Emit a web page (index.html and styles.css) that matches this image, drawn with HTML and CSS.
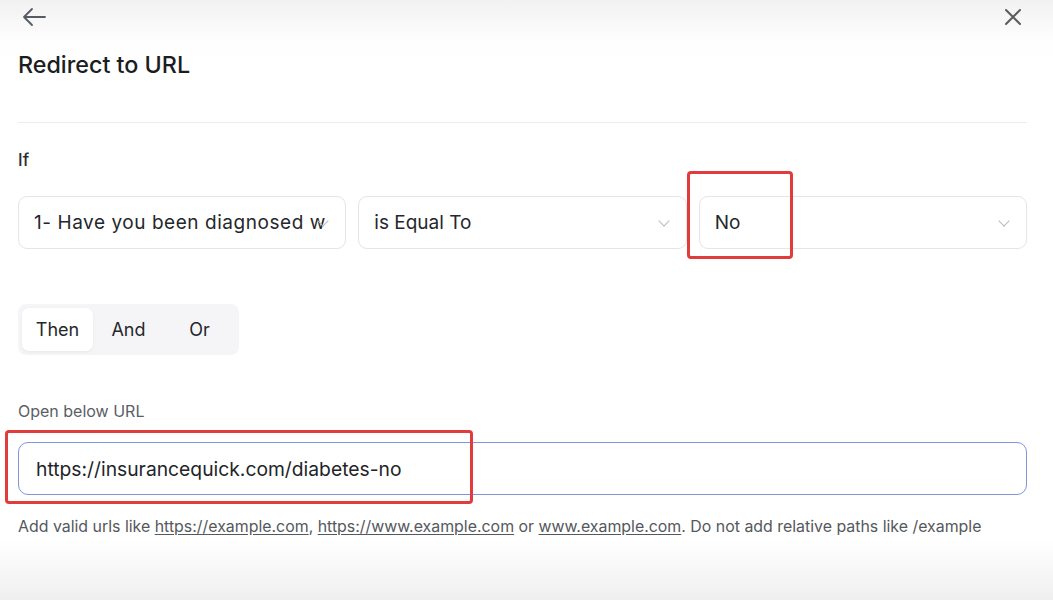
FILE: index.html
```html
<!DOCTYPE html>
<html lang="en">
<head>
    <meta charset="UTF-8">
    <meta name="viewport" content="width=device-width, initial-scale=1.0">
    <title>Redirect to URL</title>
    <link rel="stylesheet" href="styles.css">
</head>
<body>

<div id="panel">
    <div id="topbar">
        <svg class="icon" width="26" height="20" viewBox="0 0 26 20">
            <path d="M24 10H3M11 2L3 10l8 8" fill="none" stroke="#555a66" stroke-width="1.8" stroke-linecap="round" stroke-linejoin="round"/>
        </svg>
        <svg class="icon" width="18" height="18" viewBox="0 0 18 18">
            <path d="M2 2l14 14M16 2L2 16" fill="none" stroke="#5c5c5c" stroke-width="2" stroke-linecap="round"/>
        </svg>
    </div>

    <h1 id="title">Redirect to URL</h1>
    <hr id="divider">

    <div class="label-if">If</div>

    <div id="conditions">
        <div class="select">
            <span class="value">1- Have you been diagnosed with</span>
            <span class="chevron"></span>
        </div>
        <div class="select">
            <span class="value">is Equal To</span>
            <span class="chevron"></span>
        </div>
        <div class="select marked">
            <span class="value">No</span>
            <span class="chevron"></span>
            <div class="red-box box-no"></div>
        </div>
    </div>

    <div id="segments">
        <button class="seg active">Then</button>
        <button class="seg">And</button>
        <button class="seg">Or</button>
    </div>

    <div class="field-label">Open below URL</div>
    <div id="url-wrap">
        <input type="text" id="url" value="https://insurancequick.com/diabetes-no">
        <div class="red-box box-url"></div>
    </div>

    <p id="help">
        Add valid urls like <a href="#">https://example.com</a>, <a href="#">https://www.example.com</a> or <a href="#">www.example.com</a>. Do not add relative paths like /example
    </p>
</div>

</body>
</html>
```

FILE: styles.css
```css
body {
    margin: 0;
    padding: 0;
    font-family: Inter, "Noto Sans", sans-serif;
    color: #1f2328;
}

#panel {
    height: 600px;
    box-sizing: border-box;
    padding: 0 26px 0 18px;
    background: linear-gradient(to bottom, #f1f1f1 0, #fdfdfd 38px, #ffffff 60px, #ffffff 540px, #efeff0 600px);
    overflow: hidden;
}

#topbar {
    display: flex;
    justify-content: space-between;
    align-items: center;
    height: 34px;
    padding: 0 5px 0 3px;
}

#title {
    margin: 16px 0 0 0;
    font-size: 23.3px;
    font-weight: 500;
    color: #1b1d21;
}

#divider {
    border: none;
    border-top: 1px solid #ececee;
    margin: 43px 0 0 0;
}

.label-if {
    margin-top: 27px;
    font-size: 17px;
    font-weight: 500;
    color: #2b2d31;
}

#conditions {
    display: flex;
    gap: 12px;
    margin-top: 26px;
}

.select {
    position: relative;
    flex: 1 1 0;
    min-width: 0;
    height: 53px;
    box-sizing: border-box;
    border: 1px solid #e4e5e8;
    border-radius: 9px;
    display: flex;
    align-items: center;
    padding: 0 24px 0 15px;
    font-size: 19px;
    color: #25272b;
    background: #fff;
}

.select .value {
    white-space: nowrap;
    overflow: hidden;
    flex: 1 1 0;
    min-width: 0;
}

.select:first-child .value {
    margin-right: -6px;
    letter-spacing: 0.55px;
}

.chevron {
    flex: none;
    width: 7px;
    height: 7px;
    border-right: 1.3px solid #b8bbc0;
    border-bottom: 1.3px solid #b8bbc0;
    transform: rotate(45deg);
    margin-top: -4px;
    margin-right: -6px;
    position: relative;
    z-index: 1;
}

.red-box {
    position: absolute;
    border: 3px solid #e23b3b;
    border-radius: 4px;
}

.box-no {
    left: -13px;
    top: -26px;
    width: 100px;
    height: 82px;
}

#segments {
    display: inline-flex;
    margin-top: 55px;
    padding: 4px;
    background: #f5f5f8;
    border-radius: 8px;
}

.seg {
    border: none;
    background: transparent;
    font-family: Inter, "Noto Sans", sans-serif;
    font-size: 18px;
    color: #25272b;
    height: 43px;
    width: 71px;
    padding: 0;
    border-radius: 7px;
    cursor: pointer;
}

.seg.active {
    background: #fff;
    box-shadow: 0 1px 3px rgba(0, 0, 0, 0.06);
}

.field-label {
    margin-top: 46px;
    font-size: 16px;
    color: #5b5e63;
}

#url-wrap {
    position: relative;
    margin-top: 21px;
}

#url {
    display: block;
    width: 100%;
    height: 53px;
    box-sizing: border-box;
    border: 1.5px solid #8194de;
    border-radius: 10px;
    padding: 0 17px;
    font-family: Inter, "Noto Sans", sans-serif;
    font-size: 19.3px;
    color: #222428;
    outline: none;
}

.box-url {
    left: -13px;
    top: -12px;
    width: 462px;
    height: 68px;
}

#help {
    margin: 22px 0 0 0;
    font-size: 15.9px;
    color: #55585d;
}

#help a {
    color: #55585d;
    text-decoration: underline;
    text-underline-offset: 2px;
}
```
